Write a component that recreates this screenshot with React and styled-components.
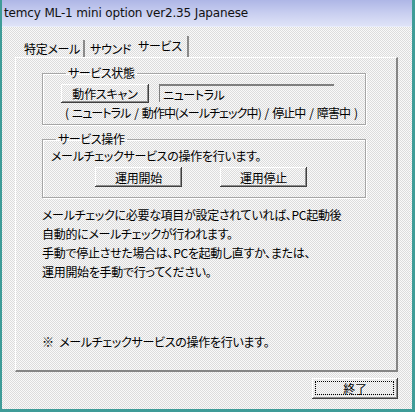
import React from "react";
import styled, { createGlobalStyle } from "styled-components";

const GlobalStyle = createGlobalStyle`
  html, body {
    margin: 0;
    padding: 0;
    background: #ececec;
  }
  body {
    font-family: "Noto Sans CJK JP", "Liberation Sans", sans-serif;
  }
`;

const dither = `
  background-color: #eeeeee;
  background-image: repeating-conic-gradient(#f9f9f9 0 25%, #dcdcdc 0 50%);
  background-size: 2px 2px;
`;

const Window = styled.div`
  width: 415px;
  height: 412px;
  box-sizing: border-box;
  border-left: 2px solid #3f9c98;
  border-right: 3px solid #3f9c98;
  border-bottom: 3px solid #3f9c98;
  display: flex;
  flex-direction: column;
  ${dither}
`;

const TitleBar = styled.div`
  height: 26px;
  flex: none;
  display: flex;
  align-items: center;
  padding-left: 2px;
  background: linear-gradient(180deg, #aeb6e6 0%, #c8cef0 50%, #dfe3f7 100%);
  border-bottom: 1px solid #e8ecfa;
  font-family: "DejaVu Sans", sans-serif;
  font-size: 12px;
  color: #111;
  letter-spacing: -0.15px;
`;

const Body = styled.div`
  flex: 1;
  display: flex;
  flex-direction: column;
  padding: 9px 0 0 13px;
`;

const TabStrip = styled.div`
  display: flex;
  align-items: flex-end;
  height: 21px;
  padding-left: 4px;
`;

const Tab = styled.div`
  display: flex;
  align-items: center;
  box-sizing: border-box;
  height: ${(p) => (p.$active ? "21px" : "17px")};
  padding: 0 ${(p) => (p.$active ? "5px" : "3px")} 0 ${(p) => (p.$active ? "3px" : "5px")};
  border-right: 2px solid ${(p) => (p.$last ? "transparent" : "#8a8a8a")};
  font-size: 12px;
  font-feature-settings: "palt";
  letter-spacing: -0.3px;
  color: #000;
  ${(p) => p.$active && "border-right-color: #8a8a8a; margin-left: -1px; padding-bottom: 2px;"}
`;

const Panel = styled.div`
  width: 383px;
  height: 315px;
  box-sizing: border-box;
  border-top: 1px solid #fff;
  border-left: 1px solid #fff;
  border-right: 2px solid #858585;
  border-bottom: 2px solid #858585;
  padding: 8px 0 0 26px;
  display: flex;
  flex-direction: column;
`;

const Group = styled.fieldset`
  width: 324px;
  box-sizing: border-box;
  margin: 0 0 ${(p) => p.$mb || 0}px 0;
  padding: 0 0 ${(p) => p.$pb}px ${(p) => p.$pl}px;
  border: 1px solid #a6a6a6;
  box-shadow: inset 1px 1px #fff, 1px 1px #fff;
  min-width: 0;
`;

const Legend = styled.legend`
  padding: 0 2px;
  margin-left: 5px;
  font-size: 12px;
  font-feature-settings: "palt";
  letter-spacing: -0.4px;
  line-height: 14px;
  color: #000;
`;

const Row = styled.div`
  display: flex;
  align-items: flex-start;
  gap: ${(p) => p.$gap || 0}px;
  margin: ${(p) => p.$m || "0"};
`;

const Button = styled.div`
  width: ${(p) => p.$w}px;
  height: ${(p) => p.$hgt || 19}px;
  box-sizing: border-box;
  display: flex;
  align-items: center;
  justify-content: center;
  position: relative;
  font-size: 12px;
  font-feature-settings: "palt";
  letter-spacing: -0.2px;
  color: #000;
  box-shadow: inset -1px -1px #404040, inset 1px 1px #fff, inset -2px -2px #8c8c8c;
  ${dither}
`;

const Focus = styled.span`
  position: absolute;
  inset: 3px 4px 4px 3px;
  border: 1px dotted #000;
`;

const Field = styled.div`
  width: 175px;
  height: 18px;
  box-sizing: border-box;
  padding-left: 3px;
  display: flex;
  align-items: center;
  font-size: 12px;
  font-feature-settings: "palt";
  letter-spacing: -0.4px;
  color: #000;
  border-top: 2px solid #7e7e7e;
  border-left: 1px solid #7e7e7e;
`;

const Text = styled.div`
  font-size: 12px;
  font-feature-settings: "palt";
  letter-spacing: ${(p) => p.$ls ?? -0.3}px;
  word-spacing: ${(p) => p.$ws ?? 0}px;
  line-height: ${(p) => p.$lh || 14}px;
  color: #000;
  margin: ${(p) => p.$m || "0"};
  white-space: pre;
`;

const Footer = styled.div`
  display: flex;
  justify-content: flex-end;
  width: 383px;
  margin-top: 6px;
`;

export default function App() {
  return (
    <>
      <GlobalStyle />
      <Window>
        <TitleBar>temcy ML-1 mini option ver2.35 Japanese</TitleBar>
        <Body>
          <TabStrip>
            <Tab>特定メール</Tab>
            <Tab $last>サウンド</Tab>
            <Tab $active>サービス</Tab>
          </TabStrip>
          <Panel>
            <Group $pl={18} $pb={4} $mb={7}>
              <Legend>サービス状態</Legend>
              <Row $gap={10} $m="4px 0 0 0">
                <Button $w={88}>動作スキャン</Button>
                <Field>ニュートラル</Field>
              </Row>
              <Text $ls={-0.9} $ws={2} $m="3px 0 0 4px">( ニュートラル / 動作中(メールチェック中) / 停止中 / 障害中 )</Text>
            </Group>
            <Group $pl={8} $pb={10} $mb={7}>
              <Legend>サービス操作</Legend>
              <Text $m="3px 0 0 0">メールチェックサービスの操作を行います。</Text>
              <Row $gap={38} $m="4px 0 0 44px">
                <Button $w={87} $hgt={20}>運用開始</Button>
                <Button $w={87} $hgt={20}>運用停止</Button>
              </Row>
            </Group>
            <Text $lh={19}>
              {"メールチェックに必要な項目が設定されていれば、PC起動後\n自動的にメールチェックが行われます。\n手動で停止させた場合は、PCを起動し直すか、または、\n運用開始を手動で行ってください。"}
            </Text>
            <Text $ws={3} $m="54px 0 0 0">※ メールチェックサービスの操作を行います。</Text>
          </Panel>
          <Footer>
            <Button $w={86} $hgt={21}>
              <Focus />
              終了
            </Button>
          </Footer>
        </Body>
      </Window>
    </>
  );
}
